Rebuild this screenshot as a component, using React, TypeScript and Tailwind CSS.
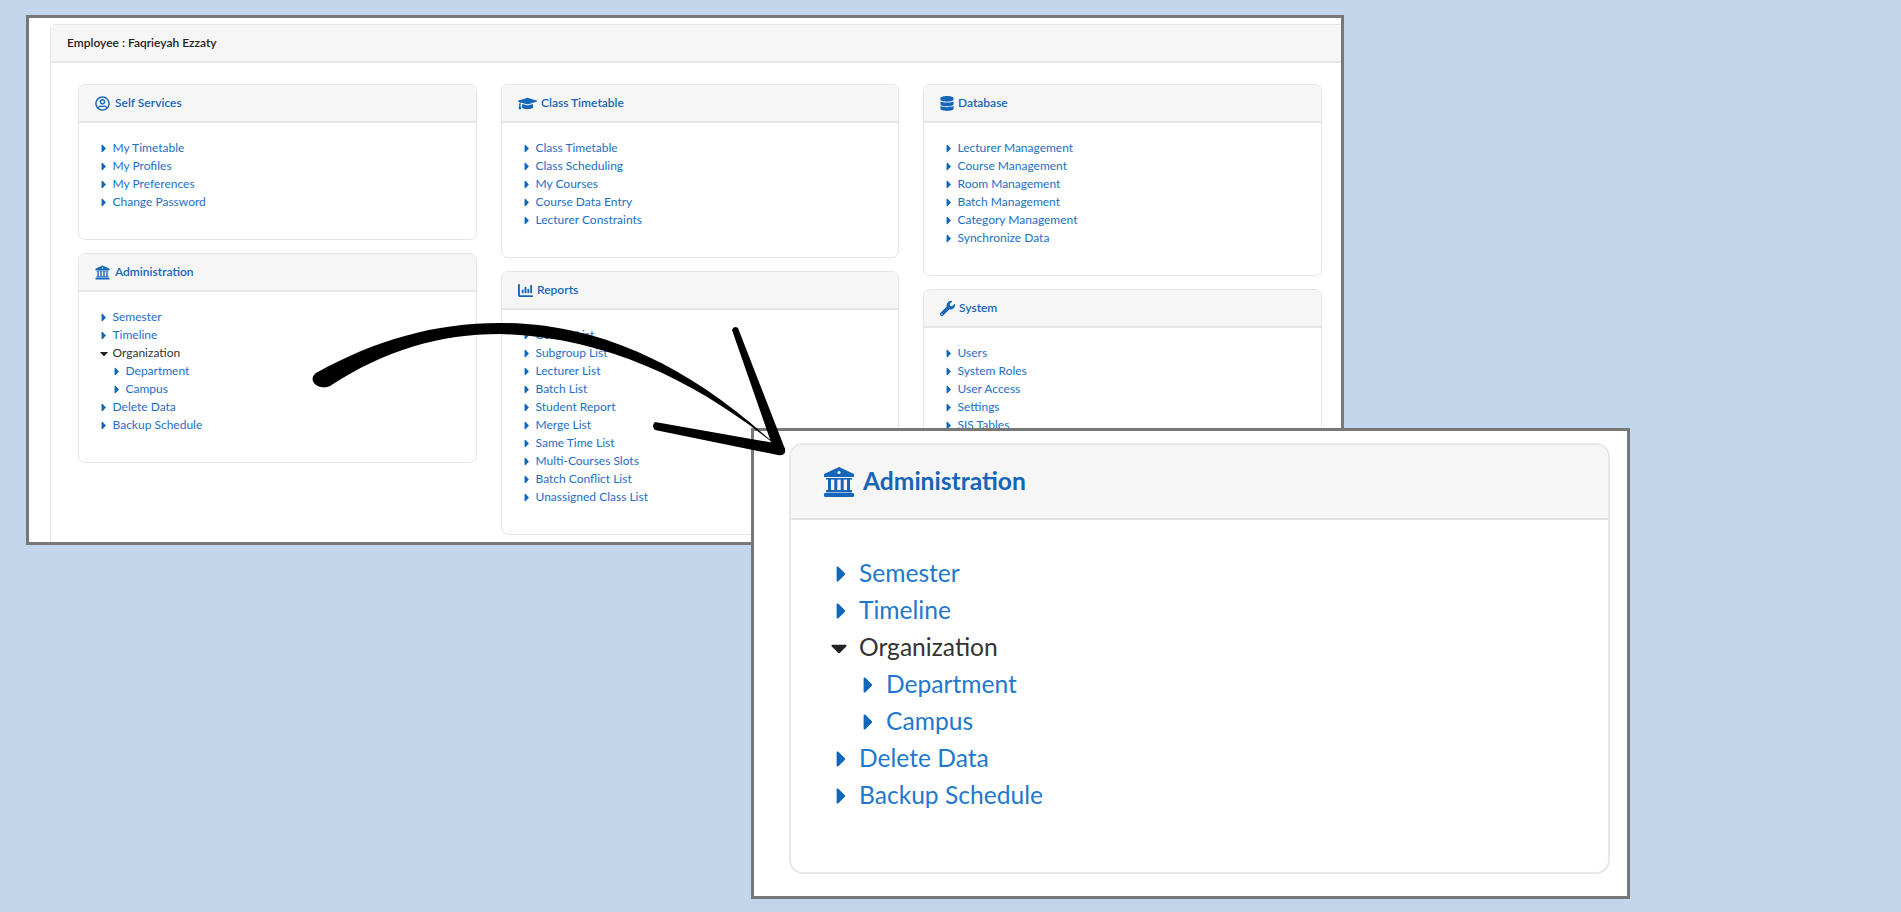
import type { ReactNode } from "react"
import { FaCaretDown, FaCaretRight, FaDatabase, FaGraduationCap, FaRegUserCircle, FaWrench } from "react-icons/fa"
import { FaChartColumn } from "react-icons/fa6"

interface PanelProps {
  title: string
  icon: ReactNode
  gap?: string
  children: ReactNode
}

const BankIcon = ({ className }: { className: string }) => (
  <svg className={className} viewBox="0 0 32 32" fill="currentColor">
    <path d="M16 1 L31 8 V11 H1 V8 Z" />
    <circle cx="16" cy="6.5" r="1.6" fill="#f6f6f6" />
    <rect x="3" y="12" width="26" height="1.6" />
    <rect x="5" y="13" width="3" height="11" />
    <rect x="11.3" y="13" width="3" height="11" />
    <rect x="17.7" y="13" width="3" height="11" />
    <rect x="24" y="13" width="3" height="11" />
    <rect x="3" y="24" width="26" height="2.4" />
    <rect x="1" y="27" width="30" height="4" rx="1.2" />
  </svg>
)

const Item = ({ label, nested }: { label: string; nested?: boolean }) => (
  <li className={`flex h-[18px] items-center text-[#1c70c6] ${nested ? "pl-[13px]" : ""}`}>
    <FaCaretRight className="ml-[5px] mr-[4.5px] h-[13px] w-[8px] shrink-0 text-[#0f66bb]" />
    <span>{label}</span>
  </li>
)

const Panel = ({ title, icon, gap = "gap-[5px]", children }: PanelProps) => (
  <div className="overflow-hidden rounded-[7px] border border-[#e6e6e6] bg-white">
    <div className={`flex h-[38px] items-center ${gap} border-b-2 border-[#e6e6e6] bg-[#f6f6f6] pl-4 text-[12px] font-semibold text-[#1565b8]`}>
      {icon}
      <span>{title}</span>
    </div>
    <ul className="pb-[28px] pl-4 pt-4 text-[12px]">{children}</ul>
  </div>
)

const BigItem = ({ label, nested }: { label: string; nested?: boolean }) => (
  <li className={`flex h-[37px] items-center text-[#1f78cc] ${nested ? "pl-[27px]" : ""}`}>
    <FaCaretRight className="mr-[11px] h-[26px] w-[13px] shrink-0 text-[#0f66bb]" />
    <span>{label}</span>
  </li>
)

const Arrow = () => (
  <svg className="pointer-events-none absolute left-0 top-0" width="1901" height="912" viewBox="0 0 1901 912">
    <path
      d="M316 373 C375 340 435 323 500 323 C610 323 700 375 778 447 C700 384 610 337 500 334 C440 334 385 350 330 386 C320 391 306 381 316 373 Z"
      fill="#000"
    />
    <path d="M732 330 Q734 325 738 328 L785 449 Q786 455 780 455 Q775 455 773 448 Z" fill="#000" />
    <path d="M655 422 L780 444 Q786 447 785 452 Q783 456 778 455 L655 430 Q651 426 655 422 Z" fill="#000" />
  </svg>
)

export default function App() {
  return (
    <div className="relative h-[912px] w-[1901px] overflow-hidden bg-[#c2d6eb] font-['Lato',sans-serif]">
      {/* main window */}
      <div className="absolute left-[26px] top-[15px] h-[530px] w-[1318px] overflow-hidden border-[3px] border-[#787878] bg-white pl-[21px] pt-[6px]">
        <div className="h-[560px] w-[1320px] rounded-tl-[5px] border-l border-t border-[#e8e8e8]">
          <div className="flex h-[38px] items-center border-b-2 border-[#e8e8e8] bg-[#f6f6f6] pl-4 text-[12px] font-semibold text-[#222]">
            Employee : Faqrieyah Ezzaty
          </div>
          <div className="grid grid-cols-[399px_398px_399px] gap-x-[24px] pl-[27px] pt-[21px]">
            <div className="flex flex-col gap-[13px]">
              <Panel title="Self Services" icon={<FaRegUserCircle className="h-[15px] w-[15px]" />}>
                <Item label="My Timetable" />
                <Item label="My Profiles" />
                <Item label="My Preferences" />
                <Item label="Change Password" />
              </Panel>
              <Panel title="Administration" icon={<BankIcon className="h-[15px] w-[15px]" />}>
                <Item label="Semester" />
                <Item label="Timeline" />
                <li className="flex h-[18px] items-center text-[#333]">
                  <FaCaretDown className="ml-[3px] mr-[2.5px] h-[13px] w-[12px] shrink-0 text-[#222]" />
                  <span>Organization</span>
                </li>
                <Item label="Department" nested />
                <Item label="Campus" nested />
                <Item label="Delete Data" />
                <Item label="Backup Schedule" />
              </Panel>
            </div>

            <div className="flex flex-col gap-[13px]">
              <Panel title="Class Timetable" gap="gap-[4px]" icon={<FaGraduationCap className="h-[19px] w-[19px]" />}>
                <Item label="Class Timetable" />
                <Item label="Class Scheduling" />
                <Item label="My Courses" />
                <Item label="Course Data Entry" />
                <Item label="Lecturer Constraints" />
              </Panel>
              <Panel title="Reports" gap="gap-[4px]" icon={<FaChartColumn className="h-[15px] w-[15px]" />}>
                <Item label="Course List" />
                <Item label="Subgroup List" />
                <Item label="Lecturer List" />
                <Item label="Batch List" />
                <Item label="Student Report" />
                <Item label="Merge List" />
                <Item label="Same Time List" />
                <Item label="Multi-Courses Slots" />
                <Item label="Batch Conflict List" />
                <Item label="Unassigned Class List" />
              </Panel>
            </div>

            <div className="flex flex-col gap-[13px]">
              <Panel title="Database" gap="gap-[4px]" icon={<FaDatabase className="h-[15px] w-[14px]" />}>
                <Item label="Lecturer Management" />
                <Item label="Course Management" />
                <Item label="Room Management" />
                <Item label="Batch Management" />
                <Item label="Category Management" />
                <Item label="Synchronize Data" />
              </Panel>
              <Panel title="System" gap="gap-[4px]" icon={<FaWrench className="h-[15px] w-[15px]" />}>
                <Item label="Users" />
                <Item label="System Roles" />
                <Item label="User Access" />
                <Item label="Settings" />
                <Item label="SIS Tables" />
              </Panel>
            </div>
          </div>
        </div>
      </div>

      {/* zoomed administration window */}
      <div className="absolute left-[751px] top-[428px] h-[471px] w-[879px] border-[3px] border-[#787878] bg-white pl-[35px] pr-[17px] pt-3">
        <div className="h-[431px] overflow-hidden rounded-[14px] border-2 border-[#e8e8e8]">
          <div className="flex h-[75px] items-center gap-[8px] border-b-2 border-[#e2e2e2] bg-[#f6f6f6] pl-[32px] text-[24.6px] font-bold text-[#1565b8]">
            <BankIcon className="h-[32px] w-[32px]" />
            <span>Administration</span>
          </div>
          <ul className="pl-[44px] pt-[35px] text-[24.6px]">
            <BigItem label="Semester" />
            <BigItem label="Timeline" />
            <li className="flex h-[37px] items-center text-[#333]">
              <FaCaretDown className="ml-[-5px] mr-[11px] h-[26px] w-[18px] shrink-0 text-[#222]" />
              <span>Organization</span>
            </li>
            <BigItem label="Department" nested />
            <BigItem label="Campus" nested />
            <BigItem label="Delete Data" />
            <BigItem label="Backup Schedule" />
          </ul>
        </div>
      </div>

      <Arrow />
    </div>
  )
}
